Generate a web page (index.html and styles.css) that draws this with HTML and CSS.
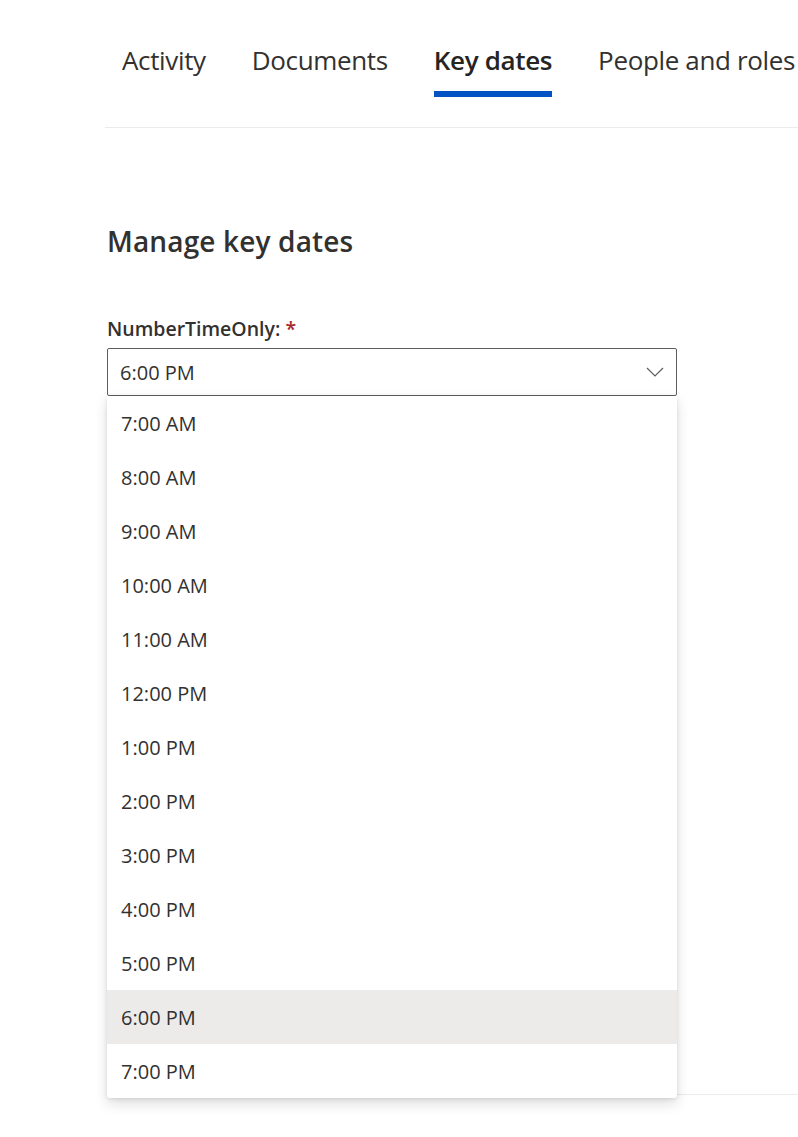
FILE: index.html
```html
<!DOCTYPE html>
<html lang="en">
<head>
<meta charset="utf-8">
<title>Key dates</title>
<link rel="stylesheet" href="styles.css">
</head>
<body>
<div class="page">
  <nav class="tabs">
    <div class="tab">Activity</div>
    <div class="tab">Documents</div>
    <div class="tab active">Key dates</div>
    <div class="tab">People and roles</div>
  </nav>
  <main class="content">
    <h1 class="title">Manage key dates</h1>
    <div class="field">
      <label class="label">NumberTimeOnly: <span class="req">*</span></label>
      <div class="select">
        <span class="select-value">6:00 PM</span>
        <svg class="chevron" width="18" height="10" viewBox="0 0 18 10"><path d="M1 1 L9 9 L17 1" fill="none" stroke="#605e5c" stroke-width="1.2"/></svg>
      </div>
      <div class="dropdown-wrap">
        <div class="behind"></div>
        <ul class="menu">
          <li class="opt">7:00 AM</li>
          <li class="opt">8:00 AM</li>
          <li class="opt">9:00 AM</li>
          <li class="opt">10:00 AM</li>
          <li class="opt">11:00 AM</li>
          <li class="opt">12:00 PM</li>
          <li class="opt">1:00 PM</li>
          <li class="opt">2:00 PM</li>
          <li class="opt">3:00 PM</li>
          <li class="opt">4:00 PM</li>
          <li class="opt">5:00 PM</li>
          <li class="opt selected">6:00 PM</li>
          <li class="opt">7:00 PM</li>
        </ul>
      </div>
    </div>
  </main>
</div>
</body>
</html>
```

FILE: styles.css
```css
* { box-sizing: border-box; }
html, body { margin: 0; padding: 0; background: #ffffff; }
body {
  font-family: "Open Sans", "Noto Sans", sans-serif;
  color: #323130;
  overflow: hidden;
  height: 1137px;
}
.page {
  padding-left: 107px;
}
.tabs {
  display: flex;
  gap: 46px;
  padding-left: 15px;
  padding-top: 40px;
  margin-left: -2px;
  border-bottom: 1px solid #edebe9;
  height: 128px;
  white-space: nowrap;
}
.tab {
  font-size: 26px;
  line-height: 40px;
  height: 57px;
  color: #323130;
  border-bottom: 6px solid transparent;
  letter-spacing: -0.35px;
}
.tab:first-child { margin-left: 2px; }
.tab.active {
  font-weight: 600;
  border-bottom-color: #0353c4;
  color: #252423;
}
.content {
  padding-top: 93px;
  padding-right: 121px;
}
.title {
  margin: 0;
  font-size: 28px;
  font-weight: 600;
  line-height: 40px;
  letter-spacing: 0.15px;
  color: #323130;
}
.field {
  margin-top: 53px;
}
.label {
  display: block;
  font-size: 19.5px;
  font-weight: 600;
  line-height: 30px;
  margin-bottom: 4px;
}
.req { color: #a4262c; }
.select {
  width: 570px;
  height: 48px;
  border: 1px solid #605e5c;
  border-radius: 2px;
  display: flex;
  align-items: center;
  justify-content: space-between;
  padding: 0 12px 0 12px;
}
.select-value {
  font-size: 20px;
}
.dropdown-wrap {
  position: relative;
}
.behind {
  height: 699px;
  margin-right: -121px;
  border-bottom: 1px solid #edebe9;
}
.menu {
  position: absolute;
  top: 0;
  left: 0;
  width: 570px;
  margin: 0;
  padding: 0;
  list-style: none;
  background: #ffffff;
  border-radius: 0 0 3px 3px;
  box-shadow: 0 6px 14px rgba(0,0,0,0.13), 0 1px 4px rgba(0,0,0,0.10);
}
.opt {
  height: 54px;
  display: flex;
  align-items: center;
  padding-left: 14px;
  font-size: 20px;
  color: #323130;
}
.opt.selected { background: #edebe9; }
```
